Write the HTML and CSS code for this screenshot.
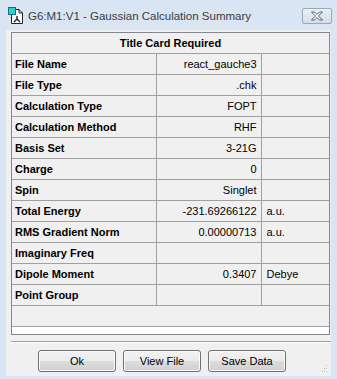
FILE: index.html
```html
<!DOCTYPE html>
<html>
<head>
<meta charset="utf-8">
<link rel="stylesheet" href="styles.css">
</head>
<body>
<div class="window">
  <div class="titlebar">
    <svg class="appicon" width="16" height="17" viewBox="0 0 16 17">
      <path d="M3.5 2.5 H11 L14.5 6 V16.5 H3.5 Z" fill="#fff" stroke="#222" stroke-width="1"/>
      <path d="M11 2.5 V6 H14.5" fill="none" stroke="#222" stroke-width="1"/>
      <rect x="0.5" y="0.5" width="7" height="7" fill="#2fd0d0" stroke="#1a6c7a"/>
      <line x1="9" y1="9" x2="9" y2="12" stroke="#222" stroke-width="1.4"/>
      <line x1="9" y1="12" x2="6" y2="15" stroke="#222" stroke-width="1.4"/>
      <line x1="9" y1="12" x2="12" y2="15" stroke="#222" stroke-width="1.4"/>
    </svg>
    <span class="title">G6:M1:V1 - Gaussian Calculation Summary</span>
    <div class="close">
      <svg width="14" height="10" viewBox="0 0 14 10">
        <path d="M1.5 1 H4.5 L7 3.5 L9.5 1 H12.5 L8.5 5 L12.5 9 H9.5 L7 6.5 L4.5 9 H1.5 L5.5 5 Z" fill="#fff" stroke="#4f5e72" stroke-width="1"/>
      </svg>
    </div>
  </div>
  <div class="client">
    <div class="gridbox">
      <table class="grid">
        <colgroup><col class="c1"><col class="c2"><col class="c3"></colgroup>
        <tr><th colspan="3" class="head">Title Card Required</th></tr>
        <tr><td class="lab">File Name</td><td class="val">react_gauche3</td><td class="unit"></td></tr>
        <tr><td class="lab">File Type</td><td class="val">.chk</td><td class="unit"></td></tr>
        <tr><td class="lab">Calculation Type</td><td class="val">FOPT</td><td class="unit"></td></tr>
        <tr><td class="lab">Calculation Method</td><td class="val">RHF</td><td class="unit"></td></tr>
        <tr><td class="lab">Basis Set</td><td class="val">3-21G</td><td class="unit"></td></tr>
        <tr><td class="lab">Charge</td><td class="val">0</td><td class="unit"></td></tr>
        <tr><td class="lab">Spin</td><td class="val">Singlet</td><td class="unit"></td></tr>
        <tr><td class="lab">Total Energy</td><td class="val">-231.69266122</td><td class="unit">a.u.</td></tr>
        <tr><td class="lab">RMS Gradient Norm</td><td class="val">0.00000713</td><td class="unit">a.u.</td></tr>
        <tr><td class="lab">Imaginary Freq</td><td class="val"></td><td class="unit"></td></tr>
        <tr><td class="lab">Dipole Moment</td><td class="val">0.3407</td><td class="unit">Debye</td></tr>
        <tr><td class="lab">Point Group</td><td class="val"></td><td class="unit"></td></tr>
        <tr><td colspan="3" class="empty"></td></tr>
      </table>
    </div>
    <div class="sep"></div>
    <div class="buttons">
      <button class="btn">Ok</button>
      <button class="btn">View File</button>
      <button class="btn">Save Data</button>
    </div>
    <div class="grip">
      <svg width="6" height="8" viewBox="0 0 6 8">
        <rect x="4" y="0" width="1" height="1" fill="#b9c3cf"/>
        <rect x="2" y="3" width="1" height="1" fill="#b9c3cf"/>
        <rect x="4" y="3" width="1" height="1" fill="#b9c3cf"/>
        <rect x="0" y="6" width="1" height="1" fill="#b9c3cf"/>
        <rect x="2" y="6" width="1" height="1" fill="#b9c3cf"/>
        <rect x="4" y="6" width="1" height="1" fill="#b9c3cf"/>
      </svg>
    </div>
  </div>
</div>
</body>
</html>
```
FILE: styles.css
```css
* { box-sizing: border-box; }
html, body { margin: 0; padding: 0; }
body { background: #d9e5f3; width: 337px; height: 379px; overflow: hidden; }

.window {
  width: 337px;
  height: 379px;
  background: #d9e5f3;
  display: flex;
  flex-direction: column;
}

.titlebar {
  height: 30px;
  display: flex;
  align-items: center;
  padding: 0 5px 0 8px;
  position: relative;
}
.appicon { flex: none; margin-top: 1px; }
.title {
  margin-left: 4px;
  font-family: "Liberation Sans", Arial, sans-serif;
  font-size: 11.5px;
  color: #3b3b3b;
  padding-top: 1px;
}
.close {
  position: absolute;
  right: 5px;
  top: 8px;
  width: 30px;
  height: 16px;
  border: 1px solid #9aa8b8;
  border-radius: 2px;
  background: linear-gradient(#e9eff6, #d3dde9);
  display: flex;
  align-items: center;
  justify-content: center;
}

.client {
  margin: 0 6px 3px 6px;
  flex: 1;
  background: #f0f0f0;
  position: relative;
  padding: 2px 0 0 5px;
  display: flex;
  flex-direction: column;
}

.gridbox {
  width: 319px;
  height: 303px;
  border: 1px solid #828790;
  background: #fff;
}
.grid {
  border-collapse: collapse;
  width: 317px;
  table-layout: fixed;
  font-family: "Liberation Sans", Arial, sans-serif;
  font-size: 11px;
  color: #000;
}
.grid col.c1 { width: 144px; }
.grid col.c2 { width: 105px; }
.grid col.c3 { width: 68px; }
.grid th, .grid td {
  background: #f0f0f0;
  padding: 0 4px;
  border-bottom: 1px solid #a0a0a0;
  white-space: nowrap;
  overflow: hidden;
}
.grid th.head {
  height: 20px;
  font-weight: bold;
  text-align: center;
  padding-top: 1px;
}
.grid td { height: 21px; padding-top: 1px; }
.grid td.lab { font-weight: bold; border-right: 1px solid #a0a0a0; padding-left: 3px; }
.grid td.val { text-align: right; border-right: 1px solid #a0a0a0; }
.grid td.unit { text-align: left; padding-left: 5px; }
.grid td.empty { height: 21px; }

.sep {
  margin: 6px 0 0 0;
  width: 320px;
  height: 2px;
  border-top: 1px solid #a0a0a0;
  border-bottom: 1px solid #ffffff;
}

.buttons {
  display: flex;
  gap: 7px;
  margin: 7px 0 0 27px;
}
.btn {
  width: 78px;
  height: 22px;
  border: 1px solid #707070;
  border-radius: 3px;
  background: linear-gradient(#f2f2f2 0%, #ebebeb 48%, #dddddd 52%, #cfcfcf 100%);
  box-shadow: inset 0 0 0 1px #fcfcfc;
  font-family: "Liberation Sans", Arial, sans-serif;
  font-size: 11px;
  color: #000;
  padding: 0;
}

.grip {
  position: absolute;
  right: 3px;
  bottom: 3px;
  width: 6px;
  height: 8px;
  line-height: 0;
}
```
